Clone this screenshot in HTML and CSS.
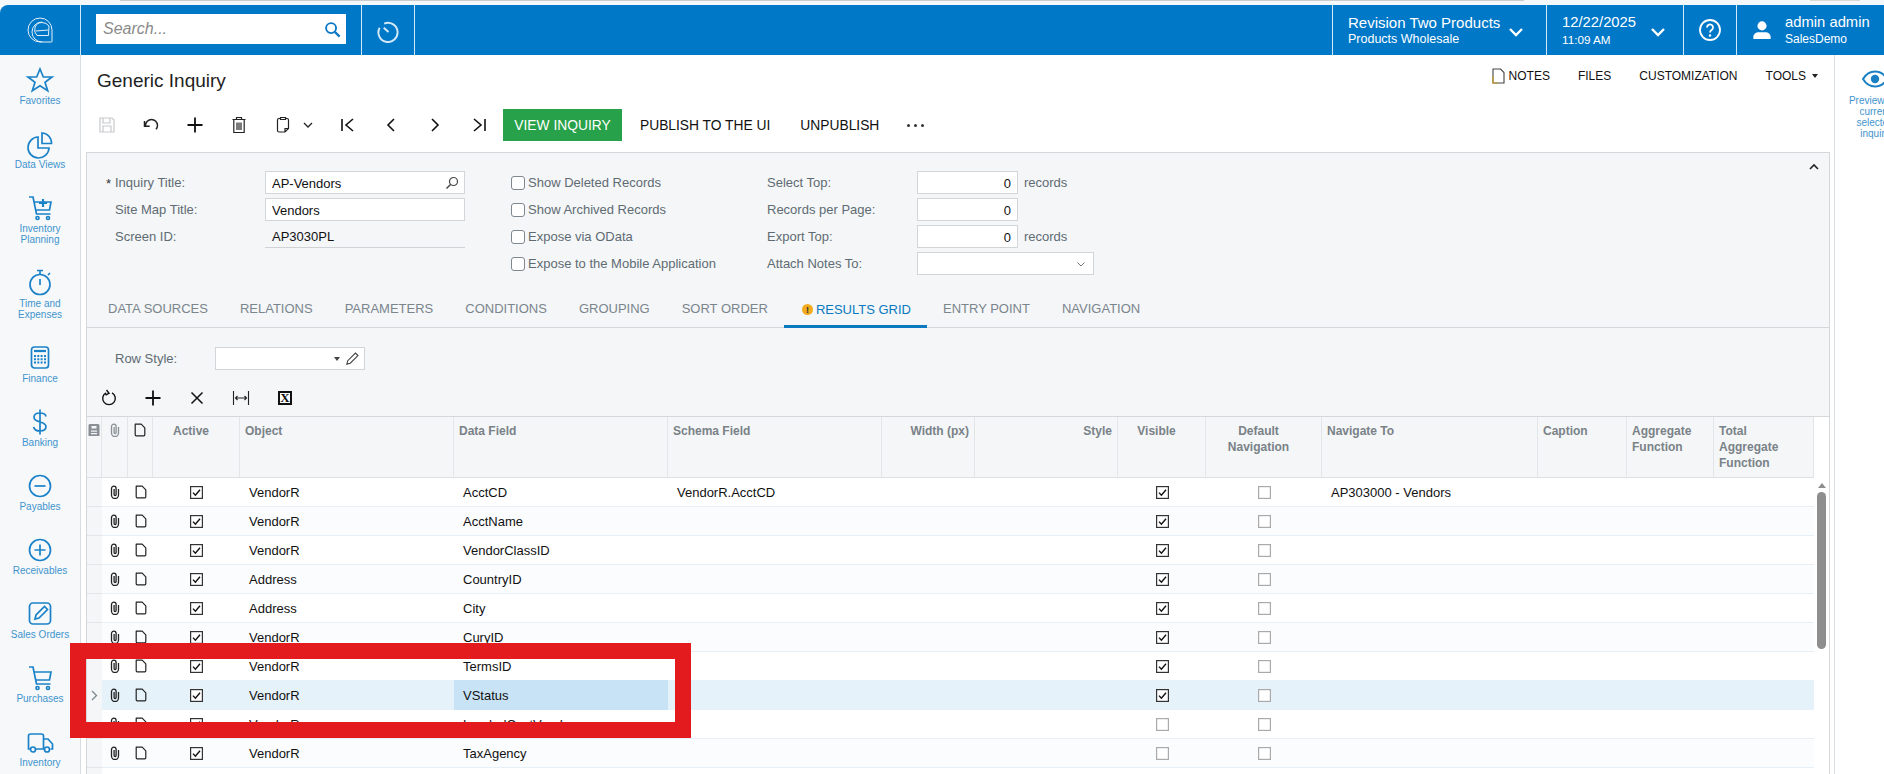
FILE: index.html
```html
<!DOCTYPE html>
<html lang="en">
<head>
<meta charset="utf-8">
<title>Generic Inquiry</title>
<link rel="stylesheet" href="styles.css">
</head>
<body>
<svg class="defs" width="0" height="0" aria-hidden="true">
  <symbol id="clip" viewBox="0 0 12 14"><path d="M9.500 4v6a3.500 3.500 0 0 1-7 0V3.500a2.300 2.300 0 0 1 4.600 0V9.500a1 1 0 0 1-2 0V4" fill="none" stroke="currentColor" stroke-width="1.300"/></symbol>
  <symbol id="file" viewBox="0 0 12 14"><path d="M1.200 1.200h6l3.600 3.600v7a1 1 0 0 1-1 1H2.200a1 1 0 0 1-1-1z" fill="none" stroke="currentColor" stroke-width="1.200" stroke-linejoin="round"/></symbol>
  <symbol id="chk" viewBox="0 0 13 13"><rect x=".6" y=".6" width="11.8" height="11.8" fill="#fff" stroke="#333" stroke-width="1.2"/><path d="M3 6.600l2.400 2.600L10 3.800" fill="none" stroke="#111" stroke-width="1.400"/></symbol>
  <symbol id="unchk" viewBox="0 0 13 13"><rect x=".6" y=".6" width="11.8" height="11.8" fill="#fff" stroke="#aaa" stroke-width="1.2"/></symbol>
  <symbol id="chev" viewBox="0 0 16 10"><path d="M2 2l6 6 6-6" fill="none" stroke="currentColor" stroke-width="2.400"/></symbol>
</svg>

<div class="app">
  <div class="strip"><span class="strip-a"></span><span class="strip-b"></span></div>

  <header class="topbar">
    <div class="tb-logo">
      <svg class="logo" viewBox="0 0 26 26"><g fill="none" stroke="#e4f1fa" stroke-width="1"><path d="M13 1a12 12 0 0 1 12 12v11.500a.5.5 0 0 1-.5.5H13A12 12 0 0 1 13 1z"/><path d="M15 5a10 10 0 0 0-10 10 10 10 0 0 0 10 10"/><path d="M15 5.500a9 9 0 0 1 7 3.500l-.5 9.500H10A7.500 7.500 0 0 1 15 5.500z"/><path d="M8.500 14l13-1"/></g></svg>
    </div>
    <div class="tb-search">
      <div class="searchbox"><span class="search-ph">Search...</span>
        <svg class="search-ic" viewBox="0 0 18 18"><circle cx="7.500" cy="7.500" r="5.300" fill="none" stroke="#0a78c6" stroke-width="2"/><path d="M11.500 11.500L16.500 16.500" stroke="#0a78c6" stroke-width="2.400"/></svg>
      </div>
    </div>
    <div class="tb-timer">
      <svg class="timer" viewBox="0 0 24 24"><path d="M7.500 3.800A10 10 0 1 1 2.800 8" fill="none" stroke="#d5eaf7" stroke-width="2"/><path d="M12 12.500L7 8" stroke="#d5eaf7" stroke-width="2"/></svg>
    </div>
    <div class="tb-fill"></div>
    <div class="tb-cell tb-branch">
      <div class="stack"><div class="l1 l-rev">Revision Two Products</div><div class="l2 l-sub">Products Wholesale</div></div>
      <svg class="tb-chev"><use href="#chev"/></svg>
    </div>
    <div class="tb-cell tb-date">
      <div class="stack"><div class="l1 l-date">12/22/2025</div><div class="l2 l-time">11:09 AM</div></div>
      <svg class="tb-chev"><use href="#chev"/></svg>
    </div>
    <div class="tb-cell tb-help">
      <svg class="help" viewBox="0 0 24 24"><circle cx="12" cy="12" r="10" fill="none" stroke="#fff" stroke-width="1.800"/><path d="M9 9.500a3 3 0 1 1 4.600 2.500c-1 .7-1.600 1.200-1.600 2.500" fill="none" stroke="#fff" stroke-width="1.800"/><circle cx="12" cy="17.500" r="1.200" fill="#fff"/></svg>
    </div>
    <div class="tb-cell tb-user">
      <svg class="user" viewBox="0 0 22 22"><circle cx="11" cy="6.500" r="5" fill="#fff"/><path d="M1.500 21v-2.500c0-3 3-5 5.500-5h8c2.500 0 5.500 2 5.500 5V21z" fill="#fff"/></svg>
      <div class="stack"><div class="l1 l-date">admin admin</div><div class="l2 l-demo">SalesDemo</div></div>
    </div>
  </header>

  <div class="body">
    <nav class="sidebar">
      <a class="nav"><svg class="nav-ic" viewBox="0 0 30 30"><path d="M15 4l3.300 8h8.700l-7 5.300 2.700 8.500L15 20.800l-7.700 5 2.700-8.500-7-5.300h8.700z"/></svg><span>Favorites</span></a>
      <a class="nav"><svg class="nav-ic" viewBox="0 0 30 30"><path d="M13 8a10.500 10.500 0 1 0 11 11H13z"/><path d="M17 4a10 10 0 0 1 9.500 10.500H17z"/></svg><span>Data Views</span></a>
      <a class="nav"><svg class="nav-ic" viewBox="0 0 30 30"><path d="M4 4h4l3.500 17h14"/><path d="M9 9h17l-1.500 8H10.500"/><path d="M18 6v8M14 10h8" stroke-width="2.200"/><circle cx="12.500" cy="25" r="1.500"/><circle cx="23" cy="25" r="1.500"/></svg><span>Inventory<br>Planning</span></a>
      <a class="nav"><svg class="nav-ic" viewBox="0 0 30 30"><circle cx="15" cy="16.500" r="10"/><path d="M12 2.500h6M15 3v4M15 11v6M23 7l2-2"/></svg><span>Time and<br>Expenses</span></a>
      <a class="nav"><svg class="nav-ic" viewBox="0 0 30 30"><rect x="6.500" y="4" width="17" height="21" rx="3"/><path d="M9 8h12" stroke-width="2.200"/><path d="M10 12v10M13.300 12v10M16.600 12v10M20 12v10" stroke-dasharray="2 1.300" stroke-width="2"/></svg><span>Finance</span></a>
      <a class="nav"><svg class="nav-ic" viewBox="0 0 30 30"><path d="M21 9.500c-.5-2.500-3-3.500-6-3.500-3.500 0-6 1.500-6 4.300 0 6 12 3.500 12 9.300 0 3-2.500 4.400-6 4.400-3.300 0-5.800-1.200-6.300-4M15 2.500v25"/></svg><span>Banking</span></a>
      <a class="nav"><svg class="nav-ic" viewBox="0 0 30 30"><circle cx="15" cy="15" r="10.500"/><path d="M9.500 15h11"/></svg><span>Payables</span></a>
      <a class="nav"><svg class="nav-ic" viewBox="0 0 30 30"><circle cx="15" cy="15" r="10.500"/><path d="M9.500 15h11M15 9.500v11"/></svg><span>Receivables</span></a>
      <a class="nav"><svg class="nav-ic" viewBox="0 0 30 30"><rect x="4.500" y="4" width="21" height="21" rx="3.500"/><path d="M10 20l1-4 8.500-8.500 3 3L14 19z"/></svg><span>Sales Orders</span></a>
      <a class="nav"><svg class="nav-ic" viewBox="0 0 30 30"><path d="M4 4h4l3.500 17h14"/><path d="M9 9h17l-1.500 8H10.500"/><circle cx="12.500" cy="25" r="1.500"/><circle cx="23" cy="25" r="1.500"/></svg><span>Purchases</span></a>
      <a class="nav"><svg class="nav-ic" viewBox="0 0 30 30"><path d="M5 22H3.500V9a2 2 0 0 1 2-2h11a2 2 0 0 1 2 2v13H11M18.500 12h4.500l4.500 5v5h-2M19 22h-1"/><circle cx="8" cy="22.500" r="2.500"/><circle cx="22" cy="22.500" r="2.500"/></svg><span>Inventory</span></a>
    </nav>

    <main class="main">
      <div class="titlerow">
        <h1 class="title">Generic Inquiry</h1>
        <div class="actions">
          <span class="act act-notes"><svg class="note-ic" viewBox="0 0 13 16"><path d="M1 15V1h7.500L12 4.500V15z" fill="#fff" stroke="#444" stroke-width="1.100"/><path d="M1 8v7h5" fill="none" stroke="#c9a227" stroke-width="1.200"/></svg>NOTES</span>
          <span class="act">FILES</span>
          <span class="act">CUSTOMIZATION</span>
          <span class="act act-tools">TOOLS<i class="caret"></i></span>
        </div>
      </div>

      <div class="toolbar">
        <button class="tbtn dim"><svg class="ti" viewBox="0 0 18 18"><path d="M2 2h12l2 2v12H2zM5 2v5h7V2M5 16v-6h8v6" fill="none" stroke="#c6c9cc" stroke-width="1.200"/></svg></button>
        <button class="tbtn"><svg class="ti" viewBox="0 0 18 18"><path d="M3.500 9.500A6 6 0 0 1 15.500 9.500c0 1.500-.6 2.800-1.500 3.800M2.500 5v5.200h5.200" fill="none" stroke="#222" stroke-width="1.500"/></svg></button>
        <button class="tbtn"><svg class="ti" viewBox="0 0 18 18"><path d="M9 1.500v15M1.500 9h15" stroke="#111" stroke-width="1.800"/></svg></button>
        <button class="tbtn"><svg class="ti" viewBox="0 0 18 18"><path d="M2.500 3.500h13M6.500 3V1.500h5V3M3.800 3.500v13h10.400v-13M7 6.500v7.500M9 6.500v7.500M11 6.500v7.500" fill="none" stroke="#222" stroke-width="1.200"/></svg></button>
        <button class="tbtn"><svg class="ti" viewBox="0 0 18 18"><path d="M6.500 1.500h5v2h-5zM6.500 2.500H5A1.500 1.500 0 0 0 3.500 4v10.500A1.500 1.500 0 0 0 5 16h6l3.500-3.500V4A1.500 1.500 0 0 0 13 2.500h-1.500M11 16v-3.500h3.500" fill="none" stroke="#222" stroke-width="1.200"/></svg></button>
        <button class="tbtn tbtn-caret"><svg class="tc" viewBox="0 0 10 6"><path d="M1 1l4 4 4-4" fill="none" stroke="#222" stroke-width="1.300"/></svg></button>
        <button class="tbtn"><svg class="ti" viewBox="0 0 18 18"><path d="M4 3v12M15 3L8 9l7 6" fill="none" stroke="#111" stroke-width="1.600"/></svg></button>
        <button class="tbtn"><svg class="ti" viewBox="0 0 18 18"><path d="M12 3L6 9l6 6" fill="none" stroke="#111" stroke-width="1.600"/></svg></button>
        <button class="tbtn"><svg class="ti" viewBox="0 0 18 18"><path d="M6 3l6 6-6 6" fill="none" stroke="#111" stroke-width="1.600"/></svg></button>
        <button class="tbtn"><svg class="ti" viewBox="0 0 18 18"><path d="M15 3v12M4 3l7 6-7 6" fill="none" stroke="#111" stroke-width="1.600"/></svg></button>
        <button class="btn-green">VIEW INQUIRY</button>
        <span class="tlink tlink-a">PUBLISH TO THE UI</span>
        <span class="tlink tlink-b">UNPUBLISH</span>
        <span class="dots"><i></i><i></i><i></i></span>
      </div>

      <section class="panel">
        <svg class="collapse" viewBox="0 0 10 7"><path d="M1 6l4-4 4 4" fill="none" stroke="#222" stroke-width="1.600"/></svg>
        <div class="form">
          <div class="fcol fcol1">
            <div class="frow"><label class="flabel req">Inquiry Title:</label><div class="field fw1">AP-Vendors<svg class="mag" viewBox="0 0 14 14"><circle cx="8.500" cy="5.500" r="4" fill="none" stroke="#444" stroke-width="1.200"/><path d="M5.500 8.500L1.500 12.500" stroke="#444" stroke-width="1.500"/></svg></div></div>
            <div class="frow"><label class="flabel">Site Map Title:</label><div class="field fw1">Vendors</div></div>
            <div class="frow"><label class="flabel">Screen ID:</label><div class="field fw1 ro">AP3030PL</div></div>
          </div>
          <div class="fcol fcol2">
            <div class="frow"><i class="cb"></i><span class="cbl">Show Deleted Records</span></div>
            <div class="frow"><i class="cb"></i><span class="cbl">Show Archived Records</span></div>
            <div class="frow"><i class="cb"></i><span class="cbl">Expose via OData</span></div>
            <div class="frow"><i class="cb"></i><span class="cbl">Expose to the Mobile Application</span></div>
          </div>
          <div class="fcol fcol3">
            <div class="frow"><label class="flabel">Select Top:</label><div class="field fw2">0</div><span class="unit">records</span></div>
            <div class="frow"><label class="flabel">Records per Page:</label><div class="field fw2">0</div></div>
            <div class="frow"><label class="flabel">Export Top:</label><div class="field fw2">0</div><span class="unit">records</span></div>
            <div class="frow"><label class="flabel">Attach Notes To:</label><div class="field fw3"><svg class="combo-c" viewBox="0 0 8 5"><path d="M.5.500L4 4 7.500.500" fill="none" stroke="#777"/></svg></div></div>
          </div>
        </div>

        <div class="tabs">
          <span class="tab">DATA SOURCES</span>
          <span class="tab">RELATIONS</span>
          <span class="tab">PARAMETERS</span>
          <span class="tab">CONDITIONS</span>
          <span class="tab">GROUPING</span>
          <span class="tab">SORT ORDER</span>
          <span class="tab active"><i class="warn">!</i>RESULTS GRID</span>
          <span class="tab">ENTRY POINT</span>
          <span class="tab">NAVIGATION</span>
        </div>

        <div class="rowstyle">
          <label class="flabel rs-label">Row Style:</label>
          <div class="field fw4"><i class="rs-caret"></i><svg class="rs-pen" viewBox="0 0 14 14"><path d="M2.500 11.500l.8-3L10 1.800l2.200 2.200-6.700 6.700z" fill="none" stroke="#444" stroke-width="1"/></svg></div>
        </div>

        <div class="gridbar">
          <button class="gbtn"><svg class="ti" viewBox="0 0 18 18"><path d="M6 3.800A6.300 6.300 0 1 0 12 3.800M6.500 1l2.500 3.300L5.500 6" fill="none" stroke="#111" stroke-width="1.400"/></svg></button>
          <button class="gbtn"><svg class="ti" viewBox="0 0 18 18"><path d="M9 1.500v15M1.500 9h15" stroke="#111" stroke-width="1.800"/></svg></button>
          <button class="gbtn"><svg class="ti" viewBox="0 0 18 18"><path d="M3.500 3.500l11 11M14.500 3.500l-11 11" stroke="#111" stroke-width="1.500"/></svg></button>
          <button class="gbtn"><svg class="ti" viewBox="0 0 18 18"><path d="M1.500 2v14M16.500 2v14M3.500 9h11M5.500 7L3.500 9l2 2M12.500 7l2 2-2 2" fill="none" stroke="#222" stroke-width="1.100"/></svg></button>
          <button class="gbtn"><span class="xl">X</span></button>
        </div>

        <div class="gridwrap">
          <div class="grid">
            <div class="ghead">
              <div class="h hi"><svg class="ic-hd" viewBox="0 0 12 14"><path d="M1.500 1h9l1 1v11h-11V2zM3.500 3v2.500h5V3zM3 7.500v1.200h6V7.500zM3 10v1.200h6V10z" fill="#8a9095" fill-rule="evenodd"/></svg></div>
              <div class="h hi"><svg class="ic ic-mute"><use href="#clip"/></svg></div>
              <div class="h hi"><svg class="ic"><use href="#file"/></svg></div>
              <div class="h hc">Active</div>
              <div class="h">Object</div>
              <div class="h">Data Field</div>
              <div class="h">Schema Field</div>
              <div class="h hr">Width (px)</div>
              <div class="h hr">Style</div>
              <div class="h hc">Visible</div>
              <div class="h hc">Default Navigation</div>
              <div class="h">Navigate To</div>
              <div class="h">Caption</div>
              <div class="h">Aggregate Function</div>
              <div class="h">Total Aggregate Function</div>
            </div>

            <div class="row"><div class="c sel"></div><div class="c ci"><svg class="ic"><use href="#clip"/></svg></div><div class="c ci"><svg class="ic"><use href="#file"/></svg></div><div class="c ci"><svg class="ck"><use href="#chk"/></svg></div><div class="c">VendorR</div><div class="c">AcctCD</div><div class="c">VendorR.AcctCD</div><div class="c"></div><div class="c"></div><div class="c ci"><svg class="ck"><use href="#chk"/></svg></div><div class="c ci"><svg class="ck"><use href="#unchk"/></svg></div><div class="c">AP303000 - Vendors</div><div class="c"></div><div class="c"></div><div class="c"></div></div>
            <div class="row"><div class="c sel"></div><div class="c ci"><svg class="ic"><use href="#clip"/></svg></div><div class="c ci"><svg class="ic"><use href="#file"/></svg></div><div class="c ci"><svg class="ck"><use href="#chk"/></svg></div><div class="c">VendorR</div><div class="c">AcctName</div><div class="c"></div><div class="c"></div><div class="c"></div><div class="c ci"><svg class="ck"><use href="#chk"/></svg></div><div class="c ci"><svg class="ck"><use href="#unchk"/></svg></div><div class="c"></div><div class="c"></div><div class="c"></div><div class="c"></div></div>
            <div class="row"><div class="c sel"></div><div class="c ci"><svg class="ic"><use href="#clip"/></svg></div><div class="c ci"><svg class="ic"><use href="#file"/></svg></div><div class="c ci"><svg class="ck"><use href="#chk"/></svg></div><div class="c">VendorR</div><div class="c">VendorClassID</div><div class="c"></div><div class="c"></div><div class="c"></div><div class="c ci"><svg class="ck"><use href="#chk"/></svg></div><div class="c ci"><svg class="ck"><use href="#unchk"/></svg></div><div class="c"></div><div class="c"></div><div class="c"></div><div class="c"></div></div>
            <div class="row"><div class="c sel"></div><div class="c ci"><svg class="ic"><use href="#clip"/></svg></div><div class="c ci"><svg class="ic"><use href="#file"/></svg></div><div class="c ci"><svg class="ck"><use href="#chk"/></svg></div><div class="c">Address</div><div class="c">CountryID</div><div class="c"></div><div class="c"></div><div class="c"></div><div class="c ci"><svg class="ck"><use href="#chk"/></svg></div><div class="c ci"><svg class="ck"><use href="#unchk"/></svg></div><div class="c"></div><div class="c"></div><div class="c"></div><div class="c"></div></div>
            <div class="row"><div class="c sel"></div><div class="c ci"><svg class="ic"><use href="#clip"/></svg></div><div class="c ci"><svg class="ic"><use href="#file"/></svg></div><div class="c ci"><svg class="ck"><use href="#chk"/></svg></div><div class="c">Address</div><div class="c">City</div><div class="c"></div><div class="c"></div><div class="c"></div><div class="c ci"><svg class="ck"><use href="#chk"/></svg></div><div class="c ci"><svg class="ck"><use href="#unchk"/></svg></div><div class="c"></div><div class="c"></div><div class="c"></div><div class="c"></div></div>
            <div class="row"><div class="c sel"></div><div class="c ci"><svg class="ic"><use href="#clip"/></svg></div><div class="c ci"><svg class="ic"><use href="#file"/></svg></div><div class="c ci"><svg class="ck"><use href="#chk"/></svg></div><div class="c">VendorR</div><div class="c">CuryID</div><div class="c"></div><div class="c"></div><div class="c"></div><div class="c ci"><svg class="ck"><use href="#chk"/></svg></div><div class="c ci"><svg class="ck"><use href="#unchk"/></svg></div><div class="c"></div><div class="c"></div><div class="c"></div><div class="c"></div></div>
            <div class="row"><div class="c sel"></div><div class="c ci"><svg class="ic"><use href="#clip"/></svg></div><div class="c ci"><svg class="ic"><use href="#file"/></svg></div><div class="c ci"><svg class="ck"><use href="#chk"/></svg></div><div class="c">VendorR</div><div class="c">TermsID</div><div class="c"></div><div class="c"></div><div class="c"></div><div class="c ci"><svg class="ck"><use href="#chk"/></svg></div><div class="c ci"><svg class="ck"><use href="#unchk"/></svg></div><div class="c"></div><div class="c"></div><div class="c"></div><div class="c"></div></div>
            <div class="row current"><div class="c sel"><svg class="arrow" viewBox="0 0 7 11"><path d="M1 1l4.500 4.500L1 10" fill="none" stroke="#7b858c" stroke-width="1.300"/></svg></div><div class="c ci"><svg class="ic"><use href="#clip"/></svg></div><div class="c ci"><svg class="ic"><use href="#file"/></svg></div><div class="c ci"><svg class="ck"><use href="#chk"/></svg></div><div class="c">VendorR</div><div class="c focus">VStatus</div><div class="c"></div><div class="c"></div><div class="c"></div><div class="c ci"><svg class="ck"><use href="#chk"/></svg></div><div class="c ci"><svg class="ck"><use href="#unchk"/></svg></div><div class="c"></div><div class="c"></div><div class="c"></div><div class="c"></div></div>
            <div class="row"><div class="c sel"></div><div class="c ci"><svg class="ic"><use href="#clip"/></svg></div><div class="c ci"><svg class="ic"><use href="#file"/></svg></div><div class="c ci"><svg class="ck"><use href="#chk"/></svg></div><div class="c">VendorR</div><div class="c">LandedCostVendor</div><div class="c"></div><div class="c"></div><div class="c"></div><div class="c ci"><svg class="ck"><use href="#unchk"/></svg></div><div class="c ci"><svg class="ck"><use href="#unchk"/></svg></div><div class="c"></div><div class="c"></div><div class="c"></div><div class="c"></div></div>
            <div class="row"><div class="c sel"></div><div class="c ci"><svg class="ic"><use href="#clip"/></svg></div><div class="c ci"><svg class="ic"><use href="#file"/></svg></div><div class="c ci"><svg class="ck"><use href="#chk"/></svg></div><div class="c">VendorR</div><div class="c">TaxAgency</div><div class="c"></div><div class="c"></div><div class="c"></div><div class="c ci"><svg class="ck"><use href="#unchk"/></svg></div><div class="c ci"><svg class="ck"><use href="#unchk"/></svg></div><div class="c"></div><div class="c"></div><div class="c"></div><div class="c"></div></div>
            <div class="row"><div class="c sel"></div><div class="c"></div><div class="c"></div><div class="c"></div><div class="c"></div><div class="c"></div><div class="c"></div><div class="c"></div><div class="c"></div><div class="c"></div><div class="c"></div><div class="c"></div><div class="c"></div><div class="c"></div><div class="c"></div></div>
          </div>
          <div class="scroll"><i class="sc-up"></i><i class="sc-thumb"></i></div>
        </div>
      </section>
    </main>

    <aside class="rightbar">
      <div class="preview">
        <svg class="eye" viewBox="0 0 26 18"><path d="M1 9c3-5 7.500-7.500 12-7.500S22 4 25 9c-3 5-7.500 7.500-12 7.500S4 14 1 9z" fill="none" stroke="#1a80c4" stroke-width="2"/><circle cx="13" cy="9" r="4.200" fill="#1a80c4"/></svg>
        <div class="pv-text">Preview the<br>current<br>selected<br>inquiry</div>
      </div>
    </aside>
  </div>

  <div class="redbox"></div>
</div>
</body>
</html>
```

FILE: styles.css
```css
* { box-sizing: border-box; }
html, body { margin: 0; padding: 0; width: 1884px; height: 774px; overflow: hidden; background: #fff; }
body { font-family: "Liberation Sans", Arial, sans-serif; font-size: 13px; color: #111; }
.defs { position: absolute; }
button { background: none; border: 0; padding: 0; margin: 0; font: inherit; }

.app { position: relative; width: 1884px; height: 774px; display: flex; flex-direction: column; overflow: hidden; }

/* top strip */
.strip { height: 5px; flex: none; background: #f4f8fa; display: flex; }
.strip-a { display: block; margin-left: 120px; width: 1404px; height: 1px; background: #c9cccf; }
.strip-b { display: block; margin-left: 286px; width: 50px; height: 1px; background: #d8d8d8; }

/* top bar */
.topbar { height: 50px; flex: none; background: #0078c8; color: #fff; display: flex; border-top-left-radius: 8px; }
.tb-logo { width: 81px; flex: none; border-right: 1px solid #d4e8f6; display: flex; align-items: center; justify-content: center; }
.logo { width: 26px; height: 26px; margin-right: 1px; }
.tb-search { width: 281px; flex: none; padding: 9px 0 0 15px; border-right: 1px solid #d4e8f6; }
.searchbox { width: 250px; height: 30px; background: #fff; display: flex; align-items: center; justify-content: space-between; padding: 0 5px 0 7px; }
.search-ph { font-style: italic; font-size: 16px; color: #8a8a8a; }
.search-ic { width: 17px; height: 17px; }
.tb-timer { width: 53px; flex: none; border-right: 1px solid #d4e8f6; display: flex; align-items: center; justify-content: center; }
.timer { width: 23px; height: 23px; margin-top: 2px; }
.tb-fill { flex: 1; }
.tb-cell { flex: none; border-left: 1px solid #d4e8f6; display: flex; align-items: center; }
.tb-branch { width: 214px; padding-left: 15px; }
.tb-date { width: 137px; padding-left: 15px; }
.tb-help { width: 53px; justify-content: center; }
.tb-user { width: 148px; padding-left: 15px; }
.stack { display: flex; flex-direction: column; }
.l1 { line-height: 18px; }
.l2 { line-height: 15px; }
.l-rev { font-size: 15px; line-height: 18px; }
.l-sub { font-size: 12.500px; }
.l-date { font-size: 14.800px; }
.l-time { font-size: 11.700px; margin-top: 1px; }
.l-demo { font-size: 12px; margin-top: 1px; }
.tb-chev { width: 16px; height: 10px; color: #fff; margin-left: 8px; margin-top: 3px; }
.tb-date .tb-chev { margin-left: 14px; }
.help { width: 24px; height: 24px; }
.user { width: 20px; height: 20px; margin-right: 13px; }

/* body */
.body { flex: 1; display: flex; min-height: 0; }
.sidebar { width: 81px; flex: none; background: #f6f8fa; border-right: 1px solid #d8dde1; overflow: hidden; }
.nav { display: flex; flex-direction: column; align-items: center; padding: 10px 0 13px; color: #3f94cd; font-size: 10px; line-height: 11px; text-align: center; white-space: nowrap; }
.nav-ic { width: 30px; height: 30px; fill: none; stroke: #1b82c8; stroke-width: 1.700; flex: none; }

.main { flex: 1; min-width: 0; padding: 0 4px 0 5px; display: flex; flex-direction: column; overflow: hidden; }
.titlerow { height: 54px; flex: none; display: flex; justify-content: space-between; padding: 13px 12px 0 11px; }
.title { margin: 2px 0 0; font-size: 19px; font-weight: 400; line-height: 22px; color: #222; }
.actions { display: flex; align-items: flex-start; font-size: 12px; line-height: 16px; color: #111; }
.act { margin-left: 28px; display: flex; align-items: center; }
.act-notes { margin-left: 0; }
.note-ic { width: 13px; height: 16px; margin-right: 4px; }
.caret { display: block; margin-left: 6px; border: 3.500px solid transparent; border-top: 4px solid #222; border-bottom: 0; }

.toolbar { height: 32px; flex: none; display: flex; align-items: center; margin-left: -1px; }
.tbtn { width: 44px; height: 32px; flex: none; display: flex; align-items: center; justify-content: center; }
.tbtn-caret { width: 20px; justify-content: flex-start; }
.ti { width: 18px; height: 18px; }
.tc { width: 10px; height: 6px; margin-left: -2px; }
.btn-green { margin-left: 2px; width: 119px; height: 32px; background: #27a24a; color: #fff; font-size: 13.800px; flex: none; }
.tlink { font-size: 13.800px; color: #111; white-space: nowrap; }
.tlink-a { margin-left: 18px; }
.tlink-b { margin-left: 30px; }
.dots { margin-left: 28px; display: flex; gap: 4px; }
.dots i { width: 3px; height: 3px; border-radius: 50%; background: #333; }

/* panel */
.panel { position: relative; margin-top: 11px; flex: 1; background: #f4f6f8; border: 1px solid #d5d8db; border-bottom: 0; min-height: 0; }
.collapse { position: absolute; right: 10px; top: 10px; width: 10px; height: 7px; }
.form { display: flex; padding: 18px 0 0 28px; height: 123px; }
.fcol { display: flex; flex-direction: column; gap: 4px; }
.fcol1 { width: 396px; }
.fcol2 { width: 256px; }
.frow { height: 23px; display: flex; align-items: center; }
.flabel { width: 150px; flex: none; color: #5f6b72; font-size: 13px; position: relative; }
.req::before { content: "*"; position: absolute; left: -9px; top: 1px; color: #333; }
.field { height: 23px; background: #fff; border: 1px solid #d3d6d9; padding: 1px 6px 0; line-height: 21px; color: #111; position: relative; flex: none; }
.fw1 { width: 200px; display: flex; justify-content: space-between; align-items: center; }
.ro { background: none; border: 0; border-bottom: 1px solid #cfd3d6; padding-left: 7px; }
.mag { width: 14px; height: 14px; margin-right: -1px; }
.fw2 { width: 101px; text-align: right; }
.fw3 { width: 177px; display: flex; align-items: center; justify-content: flex-end; padding-right: 8px; }
.combo-c { width: 8px; height: 5px; }
.unit { margin-left: 6px; color: #5f6b72; }
.cb { width: 14px; height: 14px; border: 1px solid #7f888e; border-radius: 3px; background: #fff; flex: none; }
.cbl { margin-left: 3px; color: #5f6b72; white-space: nowrap; }

.tabs { height: 52px; display: flex; align-items: flex-end; padding-left: 5px; border-bottom: 1px solid #d5d8db; }
.tab { height: 34px; padding: 0 16px 5px; display: flex; align-items: center; font-size: 13px; color: #7b858c; white-space: nowrap; margin-bottom: -1px; }
.tab.active { color: #0a79bf; border-bottom: 3px solid #0a79bf; padding: 0 16px 0 18px; }
.warn { width: 11px; height: 11px; border-radius: 50%; background: #f2ab1c; color: #333; font-size: 9px; font-style: normal; font-weight: 700; display: flex; align-items: center; justify-content: center; margin-right: 3px; }

.rowstyle { display: flex; align-items: center; padding: 19px 0 0 28px; height: 42px; }
.rs-label { width: 100px; }
.fw4 { width: 150px; display: flex; align-items: center; justify-content: flex-end; padding-right: 4px; }
.rs-caret { border: 3px solid transparent; border-top: 4px solid #444; border-bottom: 0; margin-right: 4px; }
.rs-pen { width: 16px; height: 16px; }

.gridbar { height: 46px; display: flex; align-items: center; padding: 9px 0 0; }
.gbtn { width: 44px; height: 30px; flex: none; display: flex; align-items: center; justify-content: center; }
.xl { display: block; width: 14px; height: 14px; border: 2px solid #111; background: #fff; font-family: "Liberation Serif", serif; font-weight: 700; font-size: 13px; line-height: 10px; text-align: center; color: #111; }

/* grid */
.gridwrap { display: flex; border-top: 1px solid #d5d8db; background: #fff; }
.grid { width: 1727px; flex: none; }
.ghead, .row { display: grid; grid-template-columns: 15px 26px 25px 87px 214px 214px 214px 93px 143px 88px 116px 216px 89px 87px 100px; }
.ghead { height: 61px; background: #f4f6f8; border-bottom: 1px solid #dde1e4; }
.h { padding: 6px 5px 0; font-weight: 700; font-size: 12px; line-height: 16px; color: #7a8287; border-right: 1px solid #e3e6e9; }
.hc { text-align: center; padding-right: 15px; }
.hr { text-align: right; }
.hi { padding: 6px 0 0; display: flex; justify-content: center; }
.ic { width: 12px; height: 14px; color: #222; }
.ic-mute { color: #8a9095; }
.ic-hd { width: 12px; height: 14px; }
.row { height: 29px; background: #fff; border-bottom: 1px solid #e6f0f6; }
.row:nth-child(odd) { background: #fafcfe; }
.row.current { background: #e6f2fa; height: 30px; margin-top: -1px; border-bottom: 0; }
.c { display: flex; align-items: center; padding: 0 9px; font-size: 13px; color: #111; white-space: nowrap; min-width: 0; }
.ci { padding: 0; justify-content: center; }
.sel { padding: 0; background: #f4f6f8; justify-content: center; align-self: stretch; margin-bottom: -1px; border-bottom: 1px solid #e3e6e9; }
.arrow { width: 7px; height: 11px; }
.focus { background: #c9e3f6; }
.ck { width: 13px; height: 13px; }

.scroll { width: 15px; flex: none; background: #fff; display: flex; flex-direction: column; align-items: center; padding: 66px 0 0; }
.sc-up { display: block; border: 4px solid transparent; border-bottom: 5px solid #8e8e8e; border-top: 0; }
.sc-thumb { display: block; width: 9px; height: 157px; margin-top: 4px; border-radius: 5px; background: #8e8e8e; }

/* right */
.rightbar { width: 50px; flex: none; border-left: 1px solid #d8dde1; overflow: hidden; background: #fff; }
.preview { width: 80px; padding-top: 15px; display: flex; flex-direction: column; align-items: center; }
.eye { width: 26px; height: 18px; flex: none; }
.pv-text { margin-top: 7px; color: #3f94cd; font-size: 10px; line-height: 11px; text-align: center; white-space: nowrap; }

.redbox { position: absolute; left: 70px; top: 643px; width: 621px; height: 95px; border: 16px solid #e31b1e; pointer-events: none; }
```
